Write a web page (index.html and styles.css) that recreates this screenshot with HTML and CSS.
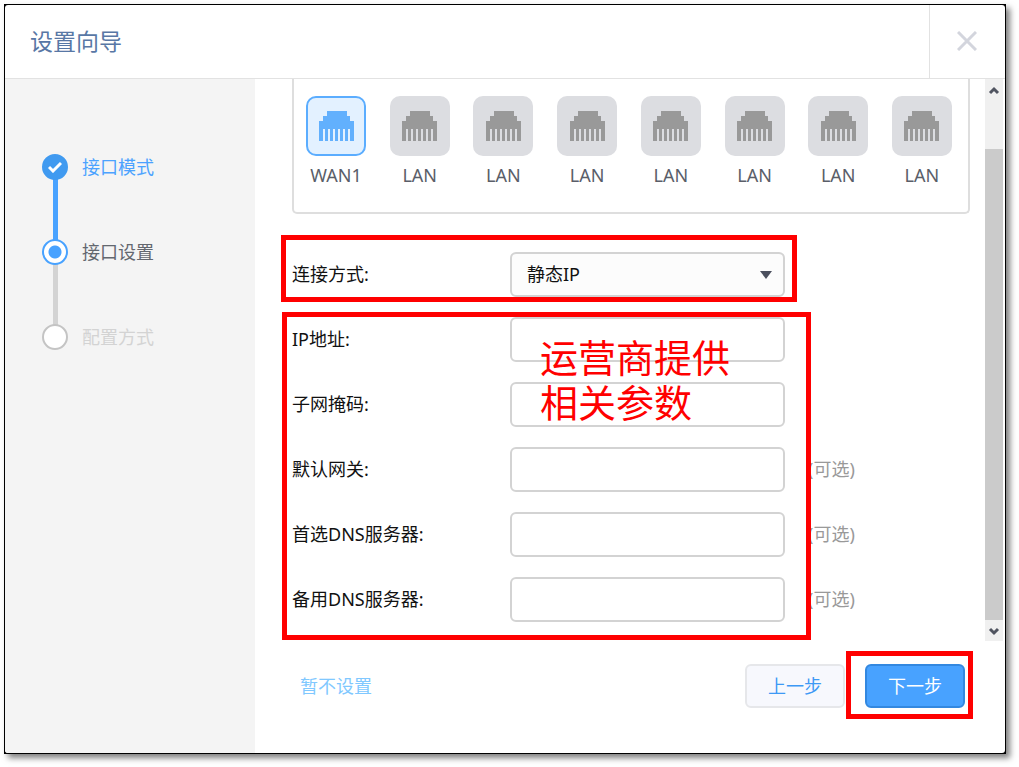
FILE: index.html
```html
<!DOCTYPE html>
<html lang="zh-CN">
<head>
    <meta charset="UTF-8">
    <meta name="viewport" content="width=device-width, initial-scale=1.0">
    <title>设置向导</title>
    <link rel="stylesheet" href="styles.css">
</head>
<body>
    <!-- Port icon shared by all interfaces -->
    <svg class="symbols" width="0" height="0" aria-hidden="true">
        <symbol id="port" viewBox="0 0 35 30">
            <path fill="currentColor" d="M8 0H28V5H31V10H35V30H31V18H29V30H26V18H24V30H21V18H19V30H16V18H14V30H11V18H9V30H6V18H4V30H0V10H4V5H8Z"/>
        </symbol>
    </svg>

    <div class="frame">
        <div class="dialog">
            <!-- Header -->
            <header class="header">
                <h1>设置向导</h1>
                <button class="close-button" type="button" aria-label="关闭">
                    <svg width="20" height="20" viewBox="0 0 20 20"><path d="M1 1L19 19M19 1L1 19" stroke="currentColor" stroke-width="3" fill="none"/></svg>
                </button>
            </header>

            <div class="body">
                <!-- Steps -->
                <ol class="steps">
                    <li class="step done">
                        <span class="marker"><svg width="14" height="12" viewBox="0 0 14 12"><path d="M1 6L5 10L13 2" stroke="#fff" stroke-width="3" fill="none"/></svg></span>
                        <span class="step-name">接口模式</span>
                    </li>
                    <li class="step current">
                        <span class="marker"></span>
                        <span class="step-name">接口设置</span>
                    </li>
                    <li class="step">
                        <span class="marker"></span>
                        <span class="step-name">配置方式</span>
                    </li>
                </ol>

                <form class="main">
                    <div class="scroll-area">
                        <div class="content">
                            <div class="ports">
                                <div class="port active"><span class="port-icon"><svg><use href="#port"/></svg></span>WAN1</div>
                                <div class="port"><span class="port-icon"><svg><use href="#port"/></svg></span>LAN</div>
                                <div class="port"><span class="port-icon"><svg><use href="#port"/></svg></span>LAN</div>
                                <div class="port"><span class="port-icon"><svg><use href="#port"/></svg></span>LAN</div>
                                <div class="port"><span class="port-icon"><svg><use href="#port"/></svg></span>LAN</div>
                                <div class="port"><span class="port-icon"><svg><use href="#port"/></svg></span>LAN</div>
                                <div class="port"><span class="port-icon"><svg><use href="#port"/></svg></span>LAN</div>
                                <div class="port"><span class="port-icon"><svg><use href="#port"/></svg></span>LAN</div>
                            </div>

                            <div class="group">
                                <div class="row">
                                    <label for="mode">连接方式:</label>
                                    <div class="select-wrap">
                                        <select id="mode">
                                            <option>静态IP</option>
                                        </select>
                                        <svg class="caret" width="14" height="10" viewBox="0 0 14 10"><path d="M1 1H13L7 9Z" fill="#4b4f5e"/></svg>
                                    </div>
                                </div>
                                <div class="mark mark-mode"></div>
                            </div>

                            <div class="group">
                                <div class="row">
                                    <label for="ip">IP地址:</label>
                                    <input type="text" id="ip">
                                </div>
                                <div class="row">
                                    <label for="mask">子网掩码:</label>
                                    <input type="text" id="mask">
                                </div>
                                <div class="row">
                                    <label for="gateway">默认网关:</label>
                                    <input type="text" id="gateway">
                                    <span class="optional">(可选)</span>
                                </div>
                                <div class="row">
                                    <label for="dns1">首选DNS服务器:</label>
                                    <input type="text" id="dns1">
                                    <span class="optional">(可选)</span>
                                </div>
                                <div class="row">
                                    <label for="dns2">备用DNS服务器:</label>
                                    <input type="text" id="dns2">
                                    <span class="optional">(可选)</span>
                                </div>
                                <div class="mark mark-params"></div>
                                <p class="note">运营商提供<br>相关参数</p>
                            </div>
                        </div>

                        <div class="scrollbar" aria-hidden="true">
                            <svg class="arrow" viewBox="0 0 18 21"><path d="M5 14L9 10L13 14" stroke="#505460" stroke-width="3" fill="none"/></svg>
                            <div class="thumb"></div>
                            <svg class="arrow" viewBox="0 0 18 21"><path d="M5 9L9 13L13 9" stroke="#505460" stroke-width="3" fill="none"/></svg>
                        </div>
                    </div>

                    <!-- Footer -->
                    <div class="footer">
                        <a href="#" class="skip">暂不设置</a>
                        <button class="button" type="button">上一步</button>
                        <div class="next">
                            <button class="button primary" type="button">下一步</button>
                            <div class="mark mark-next"></div>
                        </div>
                    </div>
                </form>
            </div>
        </div>
    </div>
</body>
</html>
```
FILE: styles.css
```css
* {
    box-sizing: border-box;
}

body {
    margin: 0;
    padding: 4px 13px 13px 4px;
    background-color: #fff;
    font-family: "Noto Sans", "Noto Sans CJK SC", sans-serif;
    font-size: 18px;
    line-height: 24px;
    color: #111;
}

.symbols {
    position: absolute;
}

/* Dialog */
.frame {
    padding: 1px;
    background: #000;
    box-shadow: 4px 4px 6px rgba(0, 0, 0, 0.5);
}

.dialog {
    background: #fff;
    border-radius: 3px;
    overflow: hidden;
}

.header {
    display: flex;
    height: 74px;
    border-bottom: 1px solid #e2e2e2;
}

.header h1 {
    flex: 1;
    margin: 0;
    padding-left: 25px;
    font-size: 23px;
    font-weight: normal;
    line-height: 73px;
    color: #5877a5;
}

.close-button {
    width: 76px;
    padding: 0 1px 2px 0;
    border: none;
    border-left: 1px solid #e2e2e2;
    background: none;
    color: #d3d5dd;
}

.close-button svg {
    vertical-align: middle;
}

.body {
    display: flex;
}

/* Steps */
.steps {
    width: 250px;
    margin: 0;
    padding: 75px 0 0 37px;
    list-style: none;
    background: #f4f4f4;
}

.step {
    position: relative;
    display: flex;
    gap: 14px;
    height: 85px;
    line-height: 26px;
    color: #d3d3d3;
}

.step::before {
    content: "";
    position: absolute;
    left: 11px;
    top: 24px;
    width: 5px;
    height: 63px;
    background: #d3d3d3;
}

.step:last-child::before {
    display: none;
}

.marker {
    position: relative;
    z-index: 1;
    display: flex;
    align-items: center;
    justify-content: center;
    width: 26px;
    height: 26px;
    border: 2px solid #c4c4c4;
    border-radius: 50%;
    background: #fff;
}

.step.done {
    color: #4ba2ff;
}

.step.done::before {
    background: #48a2ff;
}

.step.done .marker {
    border-color: #409af0;
    background: #409af0;
}

.step.current {
    color: #63676f;
}

.step.current .marker {
    border-color: #48a2ff;
    background: radial-gradient(circle, #48a2ff 6px, #fff 7px);
}

/* Main */
.main {
    flex: 1;
    min-width: 0;
}

.scroll-area {
    display: flex;
}

.content {
    flex: 1;
    padding: 0 15px 19px 37px;
}

.ports {
    display: flex;
    justify-content: space-between;
    height: 135px;
    margin-bottom: 38px;
    padding: 17px 16px 0 12px;
    border: 2px solid #dedede;
    border-top: none;
    border-radius: 0 0 5px 5px;
}

.port {
    display: flex;
    flex-direction: column;
    align-items: center;
    gap: 7px;
    width: 60px;
    color: #5a5e69;
}

.port-icon {
    display: flex;
    align-items: center;
    justify-content: center;
    width: 60px;
    height: 60px;
    border-radius: 10px;
    background: #dcdde1;
    color: #999;
}

.port-icon svg {
    width: 35px;
    height: 30px;
}

.port.active .port-icon {
    border: 2px solid #5badff;
    background: #e3f1ff;
    color: #62b0fd;
}

/* Form rows */
.group {
    position: relative;
    display: flex;
    flex-direction: column;
    gap: 20px;
    margin-top: 20px;
}

.row {
    display: flex;
    align-items: center;
    height: 45px;
}

.row label {
    width: 218px;
    padding-bottom: 2px;
}

.row input,
.row select {
    width: 275px;
    height: 45px;
    padding: 0 15px 2px;
    border: 2px solid #d3d3d3;
    border-radius: 6px;
    background: #fff;
    font: inherit;
    color: #111;
}

.row select {
    appearance: none;
    background: #fcfcfc;
}

.select-wrap {
    position: relative;
}

.caret {
    position: absolute;
    right: 12px;
    top: 18px;
    pointer-events: none;
}

.optional {
    margin-left: 23px;
    padding-bottom: 2px;
    color: #999;
}

/* Scrollbar */
.scrollbar {
    display: flex;
    flex-direction: column;
    width: 18px;
    margin-right: 2px;
    background: #f0f0f0;
}

.arrow {
    width: 18px;
    height: 21px;
}

.thumb {
    flex: 1;
    margin-top: 49px;
    background: #cbcbcb;
}

/* Footer */
.footer {
    display: flex;
    align-items: center;
    gap: 20px;
    height: 112px;
    padding: 0 40px 22px 45px;
}

.skip {
    margin-right: auto;
    color: #80c8ff;
    text-decoration: none;
}

.next {
    position: relative;
}

.button {
    display: block;
    width: 100px;
    height: 44px;
    padding: 0;
    border: 2px solid #e6e7ea;
    border-radius: 6px;
    background: #f7f8fd;
    font: inherit;
    color: #3d99f5;
}

.button.primary {
    border-color: #3388e0;
    background: #48a2ff;
    color: #fff;
}

/* Red marks over the form */
.mark {
    position: absolute;
    border: 5px solid #f00;
    pointer-events: none;
}

.mark-mode {
    left: -11px;
    top: -17px;
    width: 516px;
    height: 67px;
}

.mark-params {
    left: -10px;
    top: -5px;
    width: 529px;
    height: 328px;
}

.mark-next {
    left: -19px;
    top: -13px;
    width: 127px;
    height: 68px;
}

.note {
    position: absolute;
    left: 248px;
    top: 16px;
    margin: 0;
    font-family: "Noto Sans CJK SC", sans-serif;
    font-size: 38px;
    line-height: 45px;
    color: #f00;
    pointer-events: none;
}
```
